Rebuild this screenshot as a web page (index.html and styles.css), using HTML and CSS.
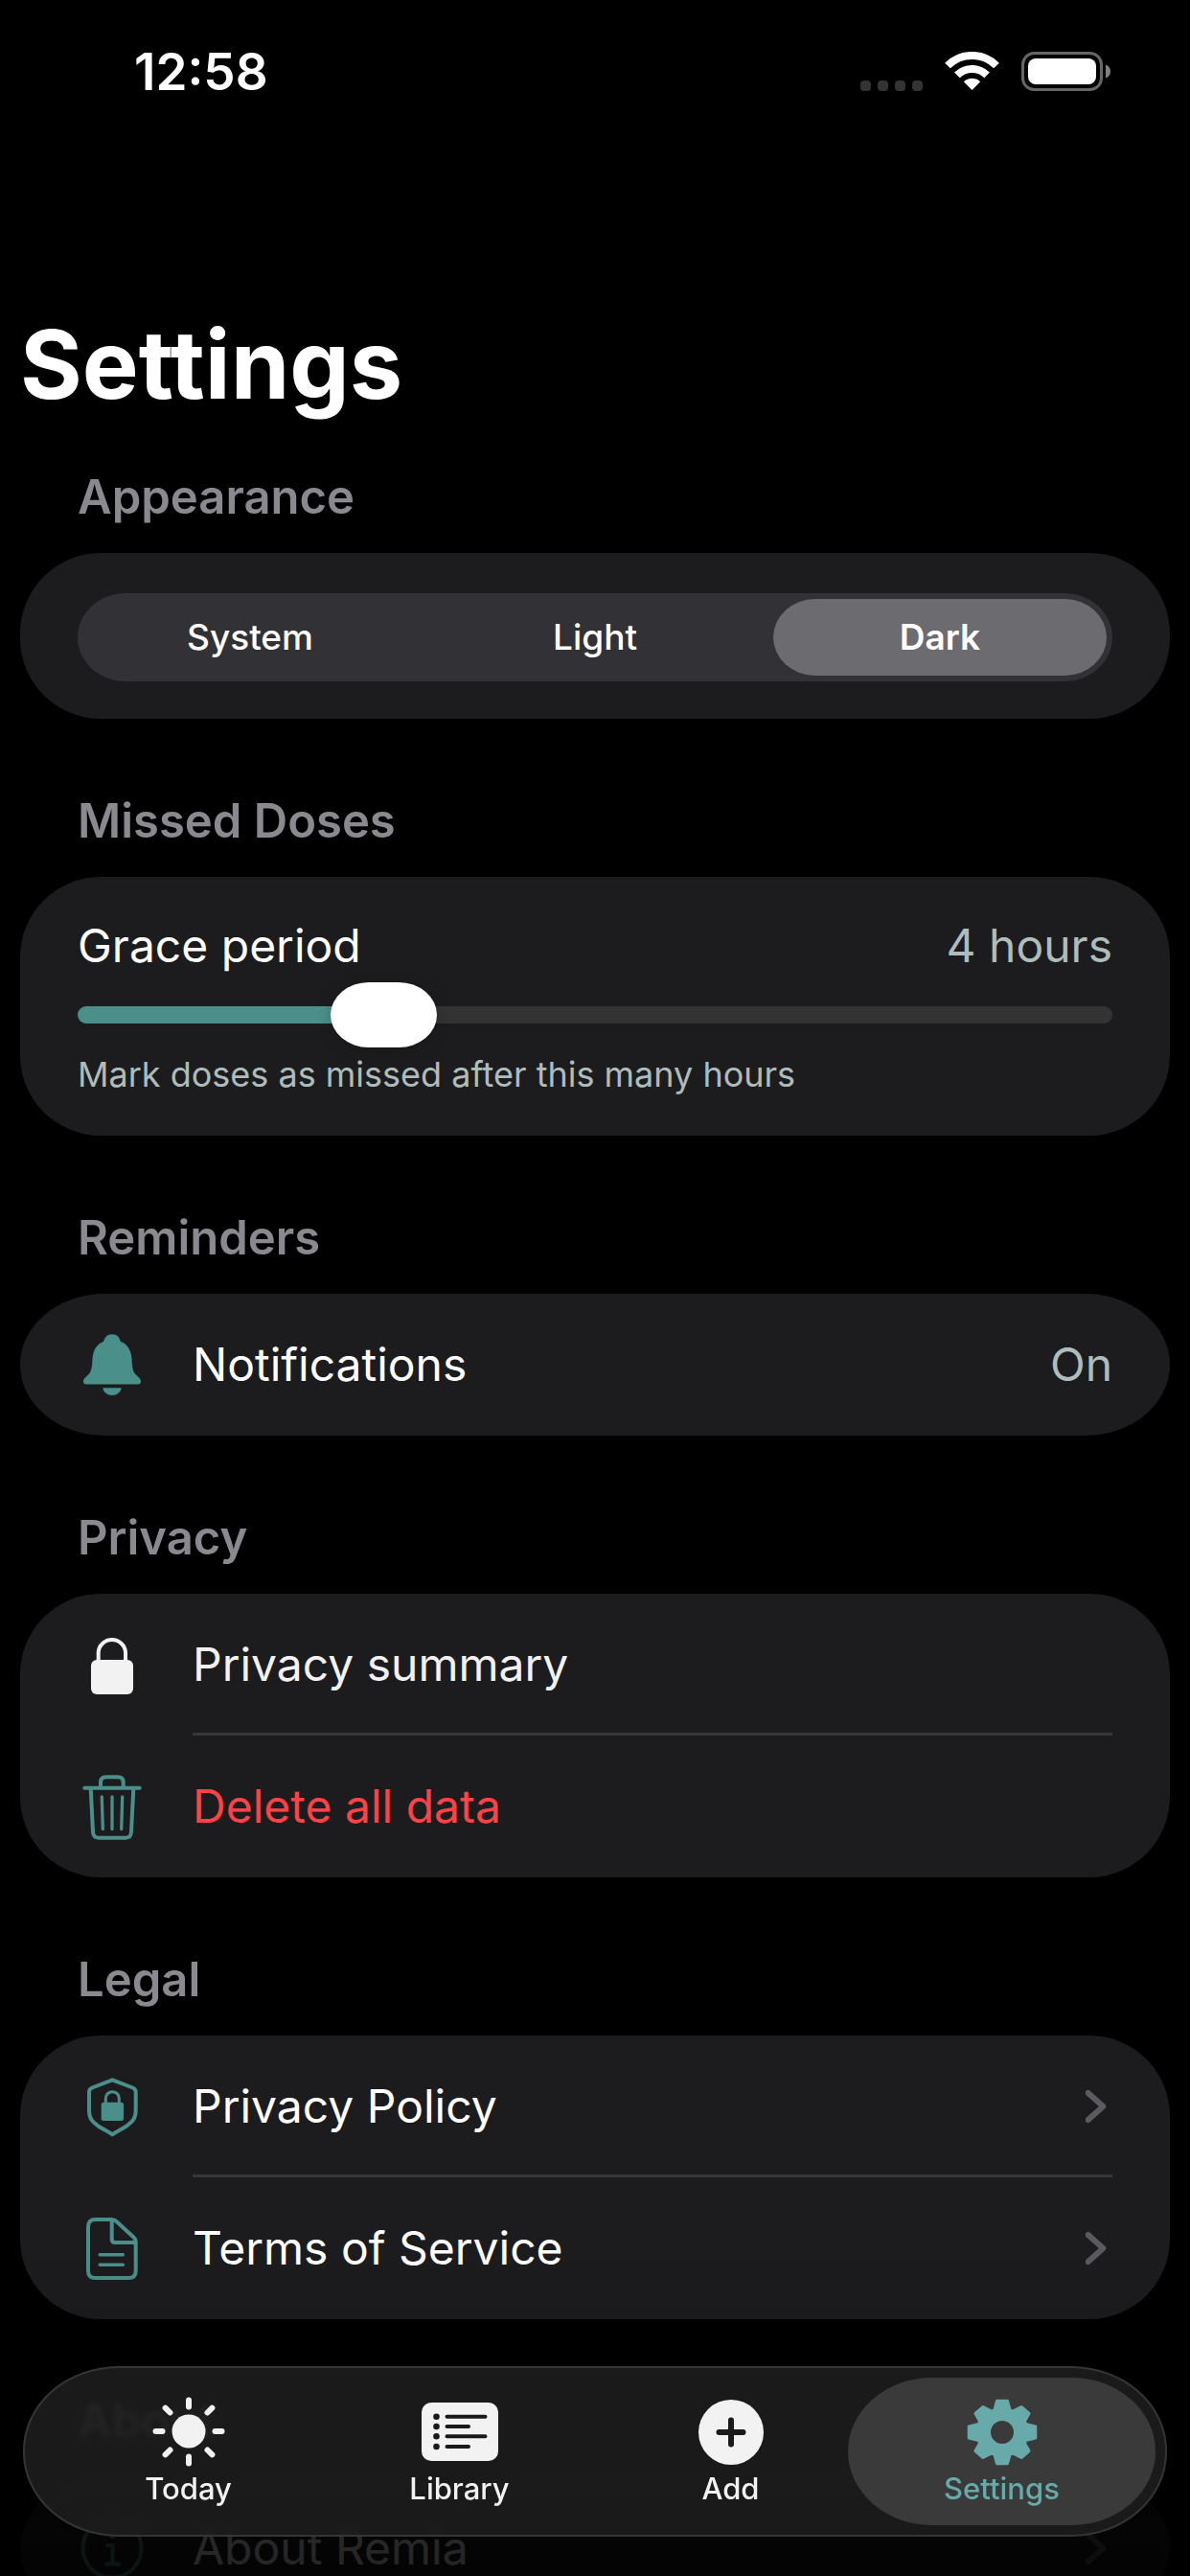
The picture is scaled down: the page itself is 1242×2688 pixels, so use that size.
FILE: index.html
```html
<!DOCTYPE html>
<html lang="en">
<head>
<meta charset="utf-8">
<meta name="viewport" content="width=device-width, initial-scale=1">
<title>Settings</title>
<link rel="stylesheet" href="styles.css">
</head>
<body>
<div class="app">
  <div class="scroll">
    <header class="status">
      <time class="clock">12:58</time>
      <svg class="status-icons" viewBox="0 0 262 42" aria-hidden="true">
        <g fill="#333">
          <rect x="0" y="30" width="11" height="11" rx="4"/>
          <rect x="18" y="30" width="11" height="11" rx="4"/>
          <rect x="36" y="30" width="11" height="11" rx="4"/>
          <rect x="54" y="30" width="11" height="11" rx="4"/>
        </g>
        <g fill="none" stroke="#fff" stroke-width="8">
          <path d="M91 14.5A36 36 0 0 1 142 14.5"/>
          <path d="M100.9 24.4A22 22 0 0 1 132.1 24.4"/>
        </g>
        <path fill="#fff" d="M116.5 40L107.8 31.3A12.3 12.3 0 0 1 125.2 31.3Z"/>
        <rect x="169.5" y="1.5" width="82" height="38" rx="12" fill="none" stroke="#666" stroke-width="3"/>
        <rect x="175" y="7" width="71" height="27" rx="8" fill="#fff"/>
        <path fill="#808080" d="M256 13.5C259 14.5 261 17 261 20.5S259 26.5 256 27.5Z"/>
      </svg>
    </header>

    <main class="content">
      <h1 class="title">Settings</h1>

      <section class="group">
        <h2 class="heading">Appearance</h2>
        <div class="card card-segment">
          <div class="segment" role="radiogroup" aria-label="Appearance">
            <label class="option"><input type="radio" name="theme"><span>System</span></label>
            <label class="option"><input type="radio" name="theme"><span>Light</span></label>
            <label class="option"><input type="radio" name="theme" checked><span>Dark</span></label>
          </div>
        </div>
      </section>

      <section class="group">
        <h2 class="heading">Missed Doses</h2>
        <div class="card card-slider">
          <div class="slider-head">
            <label for="grace">Grace period</label>
            <output class="value" for="grace">4 hours</output>
          </div>
          <input class="slider" id="grace" type="range" min="1" max="12" value="4">
          <p class="caption">Mark doses as missed after this many hours</p>
        </div>
      </section>

      <section class="group">
        <h2 class="heading">Reminders</h2>
        <div class="card card-single">
          <button class="row" type="button">
            <svg class="icon" viewBox="0 0 72 80" fill="currentColor" aria-hidden="true">
              <path d="M36 8.3C40.5 8.3 43.5 11 45 16C52 18.5 56 25 56.5 34C57 44 58 47 60 49.5C62 52 66 54 66 57.5C66 59.5 65 60.5 63 60.5H9C7 60.5 6 59.5 6 57.5C6 54 10 52 12 49.5C14 47 15 44 15.5 34C16 25 20 18.5 27 16C28.5 11 31.5 8.3 36 8.3Z"/>
              <path d="M26.3 64.3H45.7C45 69 41 72 36 72S27 69 26.3 64.3Z"/>
            </svg>
            <span class="row-main"><span class="row-label">Notifications</span><span class="value">On</span></span>
          </button>
        </div>
      </section>

      <section class="group">
        <h2 class="heading">Privacy</h2>
        <div class="card">
          <button class="row soft" type="button">
            <svg class="icon icon-light" viewBox="0 0 72 80" aria-hidden="true">
              <rect x="14" y="35" width="44" height="36" rx="6" fill="currentColor"/>
              <path d="M21.7 38V27A14.2 14.2 0 0 1 50 27V38" fill="none" stroke="currentColor" stroke-width="4"/>
            </svg>
            <span class="row-main"><span class="row-label">Privacy summary</span></span>
          </button>
          <button class="row danger" type="button">
            <svg class="icon" viewBox="0 0 72 80" fill="none" stroke="currentColor" stroke-width="4" stroke-linecap="round" stroke-linejoin="round" aria-hidden="true">
              <path d="M7.3 20.7H64.7M24 20.7V15Q24 9.3 29.7 9.3H42Q47.7 9.3 47.7 15V20.7"/>
              <path d="M13.7 21L16 66.5Q16.3 72.7 22 72.7H50Q55.7 72.7 56 66.5L58.3 21"/>
              <path stroke-width="3.3" d="M25.3 30L26.3 63.5M36 30V63.5M46.7 30L45.7 63.5"/>
            </svg>
            <span class="row-main"><span class="row-label">Delete all data</span></span>
          </button>
        </div>
      </section>

      <section class="group">
        <h2 class="heading">Legal</h2>
        <div class="card">
          <a class="row" href="#privacy-policy">
            <svg class="icon" viewBox="0 0 72 80" fill="none" stroke="currentColor" stroke-width="4" stroke-linejoin="round" aria-hidden="true">
              <path d="M36.3 12.3L57.5 20.5Q60.7 22 60.7 25V44C60.7 53 57 56 51 60.5C46 64 41 66 36.3 69.3C31.5 66 26.5 64 21.5 60.5C15.5 56 12 53 12 44V25Q12 22 15.2 20.5Z"/>
              <rect x="24.7" y="35.7" width="23.3" height="19.3" rx="2.5" fill="currentColor" stroke="none"/>
              <path stroke-width="3" d="M29.3 37V31.5A7 6.8 0 0 1 43.3 31.5V37"/>
            </svg>
            <span class="row-main"><span class="row-label">Privacy Policy</span><svg class="chevron" viewBox="0 0 28 36" aria-hidden="true"><path d="M2.7 4L18.3 18L2.7 32"/></svg></span>
          </a>
          <a class="row" href="#terms">
            <svg class="icon" viewBox="0 0 72 80" fill="none" stroke="currentColor" stroke-width="4" stroke-linecap="round" stroke-linejoin="round" aria-hidden="true">
              <path d="M18.5 10H35.5Q38.5 10 40.5 12L58.5 28.5Q60.7 30.5 60.7 33.5V63.5Q60.7 71 53.2 71H18.5Q11 71 11 63.5V17.5Q11 10 18.5 10Z"/>
              <path d="M35.7 11V30.5Q35.7 34 39.2 34H60"/>
              <path stroke-width="3.6" d="M23.3 46.7H47.3M23.3 57.3H47.3"/>
            </svg>
            <span class="row-main"><span class="row-label">Terms of Service</span><svg class="chevron" viewBox="0 0 28 36" aria-hidden="true"><path d="M2.7 4L18.3 18L2.7 32"/></svg></span>
          </a>
        </div>
      </section>

      <section class="group">
        <h2 class="heading">About</h2>
        <div class="card card-single">
          <a class="row" href="#about">
            <svg class="icon" viewBox="0 0 72 80" fill="none" stroke="currentColor" stroke-width="4" stroke-linecap="round" aria-hidden="true">
              <circle cx="36" cy="40" r="30.5"/>
              <path d="M31 37H36.5V56M30 56.5H43"/>
              <circle cx="36" cy="26.5" r="3.5" fill="currentColor" stroke="none"/>
            </svg>
            <span class="row-main"><span class="row-label">About Remia</span><svg class="chevron" viewBox="0 0 28 36" aria-hidden="true"><path d="M2.7 4L18.3 18L2.7 32"/></svg></span>
          </a>
        </div>
      </section>
    </main>
  </div>

  <div class="scrim"></div>

  <nav class="tabs" aria-label="Main">
    <a class="tab" href="#today">
      <svg class="tab-icon" viewBox="0 0 80 80" aria-hidden="true">
        <circle cx="40" cy="40" r="17.5" fill="currentColor"/>
        <path stroke="currentColor" stroke-width="6" stroke-linecap="round" d="M40 7.500V14.500M40 66.500V73.500M5.500 40H12.500M67.500 40H74.500M15.600 15.600L20.500 20.500M59.500 59.500L64.400 64.400M15.600 64.400L20.500 59.500M59.500 20.500L64.400 15.600"/>
      </svg>
      <span>Today</span>
    </a>
    <a class="tab" href="#library">
      <svg class="tab-icon" viewBox="0 0 80 80" aria-hidden="true">
        <rect x="0" y="10" width="80" height="61" rx="10" fill="currentColor"/>
        <g fill="#1a1a1a"><circle cx="15.5" cy="24.7" r="3.3"/><circle cx="15.5" cy="35" r="3.3"/><circle cx="15.5" cy="45.3" r="3.3"/><circle cx="15.5" cy="56" r="3.3"/></g>
        <path stroke="#1a1a1a" stroke-width="4" stroke-linecap="round" d="M26.5 24.7H66.5M26.5 35H49M26.5 45.3H66.5M26.5 56H49"/>
      </svg>
      <span>Library</span>
    </a>
    <a class="tab" href="#add">
      <svg class="tab-icon" viewBox="0 0 80 80" aria-hidden="true">
        <circle cx="40" cy="41" r="34" fill="currentColor"/>
        <path stroke="#1a1a1a" stroke-width="6" stroke-linecap="round" d="M40 28.5V53.5M27.5 41H52.5"/>
      </svg>
      <span>Add</span>
    </a>
    <a class="tab current" href="#settings" aria-current="page">
      <svg class="tab-icon" viewBox="0 0 80 80" aria-hidden="true">
        <g transform="translate(40 41)">
          <path fill="currentColor" fill-rule="evenodd" stroke="currentColor" stroke-width="3" stroke-linejoin="round" d="M-5.500 -32.700H5.500L8 -23.500L11 -22L20 -26.500L28 -19.500L23.500 -11.500L24.500 -8.500L34.800 -6V6L24.500 8.500L23.500 11.500L28 19.500L20 26.500L11 22L8 23.500L5.500 32.700H-5.500L-8 23.500L-11 22L-20 26.500L-28 19.500L-23.500 11.500L-24.500 8.500L-34.800 6V-6L-24.500 -8.500L-23.500 -11.500L-28 -19.500L-20 -26.500L-11 -22L-8 -23.500ZM0 -13.500A13.500 13.500 0 1 0 0 13.500A13.500 13.500 0 1 0 0 -13.500Z"/>
        </g>
      </svg>
      <span>Settings</span>
    </a>
  </nav>
</div>
</body>
</html>
```
FILE: styles.css
```css
* {
  box-sizing: border-box;
}

body {
  margin: 0;
  background: #000;
  color: #fff;
  font-family: Inter, "Liberation Sans", sans-serif;
  font-size: 48px;
  line-height: 60px;
}

h1,
h2,
p {
  margin: 0;
}

.app {
  position: relative;
  height: 100vh;
  overflow: hidden;
}

.scroll {
  height: 100%;
  overflow-y: auto;
  scrollbar-width: none;
}

/* Status bar */
.status {
  display: flex;
  align-items: center;
  justify-content: space-between;
  height: 150px;
  padding: 0 82px 0 140px;
}

.clock {
  font-size: 53px;
  font-weight: 600;
}

.status-icons {
  width: 262px;
  height: 42px;
}

/* Content */
.content {
  display: flex;
  flex-direction: column;
  gap: 77px;
  padding: 170px 21px 260px;
}

.title {
  margin-bottom: -28px;
  font-size: 99px;
  font-weight: 700;
  line-height: 120px;
}

.heading {
  padding: 0 60px;
  margin-bottom: 28px;
  color: #8a898f;
  font-size: 49px;
  font-weight: 600;
}

.card {
  overflow: hidden;
  border-radius: 84px;
  background: #1c1c1e;
}

.card-single {
  border-radius: 88px / 74px;
}

.value {
  color: #aebdbb;
}

/* Segmented control */
.card-segment {
  padding: 42px 60px 39px;
}

.segment {
  display: grid;
  grid-template-columns: repeat(3, 1fr);
  border-radius: 50px / 46px;
  background: #323135;
}

.option {
  position: relative;
  display: block;
  padding: 6px;
  font-size: 37px;
  font-weight: 500;
  text-align: center;
}

.option input {
  position: absolute;
  opacity: 0;
}

.option span {
  display: block;
  border-radius: 44px / 40px;
  line-height: 80px;
}

.option input:checked + span {
  background: #6c6b70;
  font-weight: 600;
}

/* Grace period slider */
.card-slider {
  padding: 42px 60px;
}

.slider-head {
  display: flex;
  justify-content: space-between;
}

.slider {
  display: block;
  width: 100%;
  height: 68px;
  margin: 8px 0 6px;
  appearance: none;
  background: transparent;
}

.slider::-webkit-slider-runnable-track {
  height: 18px;
  border-radius: 9px;
  background: linear-gradient(to right, #4b8f8b 30%, #333 30%);
}

.slider::-webkit-slider-thumb {
  width: 111px;
  height: 68px;
  margin-top: -25px;
  appearance: none;
  border-radius: 40px / 34px;
  background: #fff;
  box-shadow: 0 2px 16px rgb(0 0 0 / 20%);
}

.caption {
  color: #aebdbb;
  font-size: 36px;
  line-height: 44px;
}

/* Rows */
.row {
  display: flex;
  gap: 48px;
  align-items: center;
  width: 100%;
  height: 148px;
  padding: 0 60px;
  border: 0;
  background: none;
  color: #fff;
  font: inherit;
  text-align: left;
  text-decoration: none;
}

.row-main {
  display: flex;
  flex: 1;
  align-items: center;
  align-self: stretch;
  justify-content: space-between;
}

.row + .row .row-main {
  box-shadow: 0 -3px #373739;
}

.soft {
  color: #f2f2f2;
}

.danger {
  color: #ff4245;
}

.icon {
  flex: none;
  width: 72px;
  height: 80px;
  color: #4b8f8b;
}

.icon-light {
  color: #f2f2f2;
}

.chevron {
  width: 28px;
  height: 36px;
  fill: none;
  stroke: #5b5a5f;
  stroke-width: 6;
  stroke-linecap: round;
  stroke-linejoin: round;
}

/* Fade behind the tab bar */
.scrim {
  position: absolute;
  right: 0;
  bottom: 0;
  left: 0;
  height: 340px;
  background: linear-gradient(transparent, rgb(0 0 0 / 10%) 25%, rgb(0 0 0 / 84%) 80%, rgb(0 0 0 / 86%));
  pointer-events: none;
}

/* Floating tab bar */
.tabs {
  position: absolute;
  right: 24px;
  bottom: 41px;
  left: 24px;
  display: flex;
  padding: 10px 29px;
  border: 2px solid #353535;
  border-radius: 100px / 88px;
  background: rgb(30 30 30 / 86%);
  backdrop-filter: blur(3px);
}

.tab {
  display: flex;
  flex: 1;
  flex-direction: column;
  gap: 2px;
  align-items: center;
  padding: 16px 0 20px;
  margin: 0 -19px;
  border-radius: 88px / 77px;
  color: #f2f2f2;
  font-size: 31px;
  font-weight: 500;
  line-height: 36px;
  text-decoration: none;
}

.tab-icon {
  width: 80px;
  height: 80px;
}

.current {
  background: #3a3a3a;
  color: #68aaa9;
}
```
